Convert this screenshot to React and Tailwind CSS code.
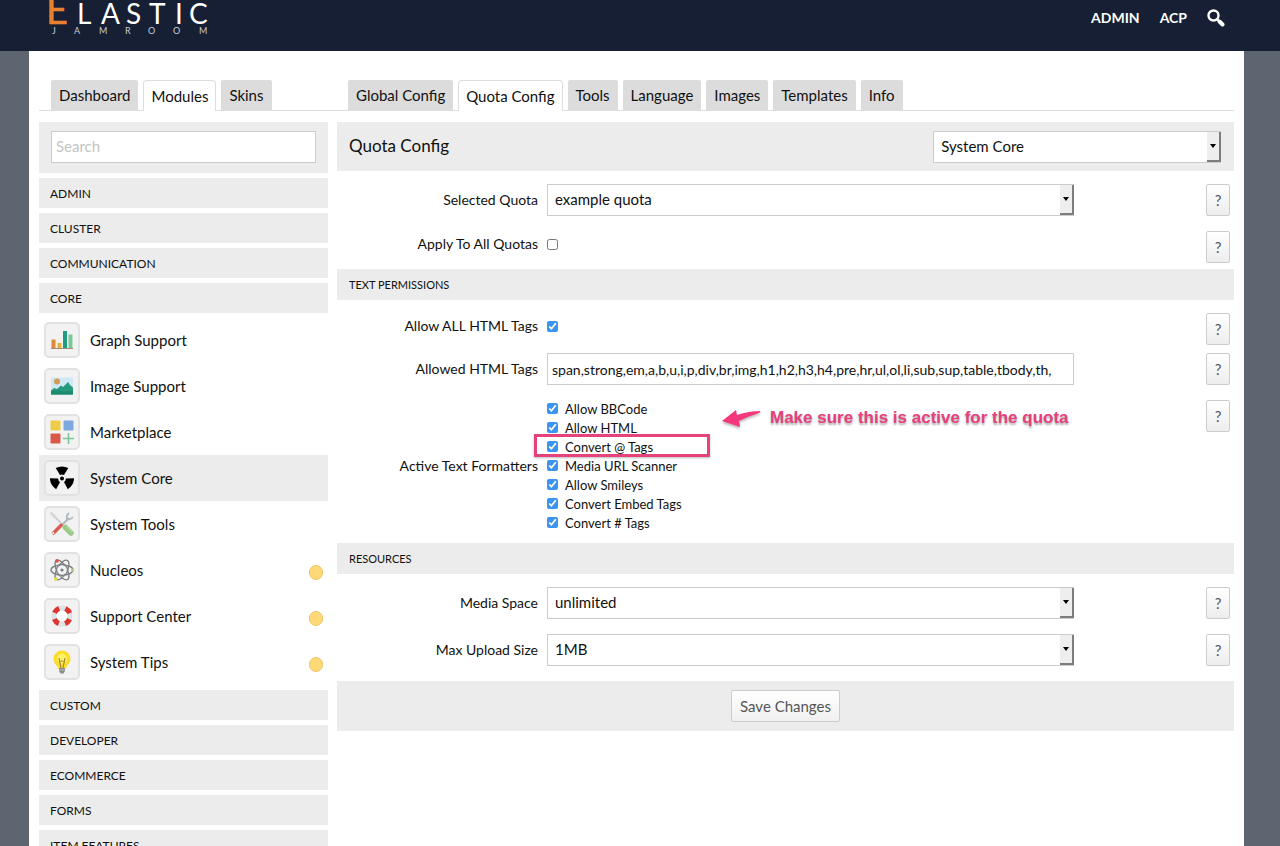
import { useState } from "react";

const moduleTabs = ["Dashboard", "Modules", "Skins"];
const configTabs = ["Global Config", "Quota Config", "Tools", "Language", "Images", "Templates", "Info"];

const topCategories = ["Admin", "Cluster", "Communication", "Core"];
const bottomCategories = ["Custom", "Developer", "Ecommerce", "Forms", "Item Features"];

const formatters = [
    "Allow BBCode",
    "Allow HTML",
    "Convert @ Tags",
    "Media URL Scanner",
    "Allow Smileys",
    "Convert Embed Tags",
    "Convert # Tags",
];

const GraphIcon = () => (
    <svg viewBox="0 0 24 24" className="size-6">
        <rect x="1.5" y="11.5" width="4" height="9" fill="#e0893c" />
        <rect x="7.5" y="15" width="4" height="5.5" fill="#e3b23c" />
        <rect x="13" y="3" width="4" height="17.5" fill="#1f9d80" />
        <rect x="18.5" y="6.500" width="4" height="14" fill="#7cc79a" />
        <path d="M1 20.500h22" stroke="#a58d72" strokeWidth="1" />
    </svg>
);

const ImageIcon = () => (
    <svg viewBox="0 0 24 24" className="size-6">
        <rect x="1" y="3.500" width="22" height="17" fill="#cfe8f5" />
        <circle cx="7" cy="7.500" r="3" fill="#d39a52" />
        <path d="M1 20.500v-4l3-2.500 3 1 4-3.500 2 1.500 5-5 2 3 3 2.500v7z" fill="#279a7c" />
        <path d="M1 20.500v-3l6-1 8 1 8-1v4z" fill="#1e8a6f" />
    </svg>
);

const MarketIcon = () => (
    <svg viewBox="0 0 24 24" className="size-6">
        <rect x="0.500" y="0.500" width="10" height="10" rx="1" fill="#efcb4a" />
        <rect x="13.500" y="0.500" width="10" height="10" rx="1" fill="#7ea9de" />
        <rect x="0.500" y="13.500" width="10" height="10" rx="1" fill="#d95848" />
        <path d="M18.500 13v11M13 18.500h11" stroke="#7cc79a" strokeWidth="1.600" />
    </svg>
);

const CoreIcon = () => (
    <svg viewBox="0 0 24 24" className="size-6">
        <g transform="translate(12 12.500)">
            <circle r="2" fill="#000" />
            <path id="blade" d="M-2 -3.400L-6.300 -10.400Q0 -13.600 6.300 -10.400L2 -3.400Q0 -4.500 -2 -3.400z" fill="#000" />
            <use href="#blade" transform="rotate(120)" />
            <use href="#blade" transform="rotate(240)" />
        </g>
    </svg>
);

const ToolsIcon = () => (
    <svg viewBox="0 0 24 24" className="size-6" fill="none" strokeLinecap="round">
        <path d="M2 2l11 11" stroke="#c4c8cb" strokeWidth="1.600" />
        <path d="M1.500 1.500l4 4" stroke="#d3d6d8" strokeWidth="2.600" />
        <path d="M15.500 15.500l5.500 5.500" stroke="#9cc98b" strokeWidth="5.500" />
        <path d="M17 14.500l5 5" stroke="#b7dba8" strokeWidth="1.200" />
        <path d="M18.500 6.500L11 14" stroke="#b3babf" strokeWidth="2.200" />
        <path d="M18.500 1.500q-2.500 2-1.500 5.500 3.500 1 5.500-1.500" stroke="#b3babf" strokeWidth="1.800" />
        <path d="M11 13.500L3.500 21" stroke="#d6604f" strokeWidth="3.600" />
        <circle cx="3.200" cy="21.200" r="1.100" fill="#f5f5f5" />
    </svg>
);

const NucleosIcon = () => (
    <svg viewBox="0 0 24 24" className="size-6" fill="none" stroke="#7b7e80" strokeWidth="1.300">
        <ellipse cx="12" cy="12" rx="11" ry="5" />
        <ellipse cx="12" cy="12" rx="11" ry="5" transform="rotate(60 12 12)" />
        <ellipse cx="12" cy="12" rx="11" ry="5" transform="rotate(120 12 12)" />
        <circle cx="12" cy="12" r="5.500" fill="#f2f2f2" />
        <circle cx="12" cy="12" r="1.600" fill="#7b7e80" stroke="none" />
        <circle cx="7" cy="2.800" r="1.900" fill="#d9534f" stroke="none" />
        <circle cx="22.500" cy="12" r="1.500" fill="#bcd07a" stroke="none" />
        <circle cx="6" cy="21" r="1.900" fill="#e0d84c" stroke="none" />
    </svg>
);

const SupportIcon = () => (
    <svg viewBox="0 0 24 24" className="size-6" fill="none">
        <circle cx="12" cy="12" r="9.500" stroke="#d3d8dc" strokeWidth="1.500" />
        <circle cx="12" cy="12" r="7.500" stroke="#dde2e5" strokeWidth="5" />
        <circle cx="12" cy="12" r="8" stroke="#e0352f" strokeWidth="5.500" strokeDasharray="6.280 6.280" strokeDashoffset="-3.140" />
        <circle cx="12" cy="12" r="5.500" fill="#fff" />
    </svg>
);

const TipsIcon = () => (
    <svg viewBox="0 0 24 24" className="size-6" fill="none">
        <path d="M12 0.500a8.500 8.500 0 0 0-8.500 8.500c0 3.500 2 5 3.500 7 .8 1.200 1 2.500 1.500 3h7c.500-.5.700-1.800 1.500-3 1.500-2 3.500-3.500 3.500-7A8.500 8.500 0 0 0 12 .5z" fill="#fbdc26" />
        <circle cx="12" cy="8.500" r="5" fill="#fff06c" />
        <path d="M9 8l2 10M15 8l-2 10M10.500 12l1.500-1.500 1.500 1.500" stroke="#8f7a2a" strokeWidth="1" />
        <path d="M9 18h6v3l-1.500 2.500h-3L9 21z" fill="#8b8e91" />
        <path d="M9 20h6" stroke="#c2c5c8" strokeWidth="0.800" />
    </svg>
);

const coreModules = [
    { name: "Graph Support", icon: GraphIcon },
    { name: "Image Support", icon: ImageIcon },
    { name: "Marketplace", icon: MarketIcon },
    { name: "System Core", icon: CoreIcon, active: true },
    { name: "System Tools", icon: ToolsIcon },
    { name: "Nucleos", icon: NucleosIcon, pending: true },
    { name: "Support Center", icon: SupportIcon, pending: true },
    { name: "System Tips", icon: TipsIcon, pending: true },
];

const Logo = () => (
    <svg width="170" height="51" viewBox="0 0 170 51" role="img" aria-label="Elastic Jamroom" className="font-['Lato',sans-serif]">
        <text x="6" y="24" fontSize="38" fill="#e8812f" stroke="#e8812f" strokeWidth="0.500">E</text>
        <text x="37 61 86 109 135 149" y="24" fontSize="28" fill="#fff">LASTIC</text>
        <text x="12 34 59 85 108 133 159" y="34" fontSize="9" fill="#c9ced8">JAMROOM</text>
    </svg>
);

const Header = () => {
    return (
        <header className="h-[51px] bg-[#161f33] flex items-start justify-between pl-10 pr-[55px] text-white">
            <a href="#home"><Logo /></a>
            <nav className="flex items-center gap-5 h-[35px] text-[14px] font-bold">
                <a href="#admin">ADMIN</a>
                <a href="#acp">ACP</a>
                <button type="button" aria-label="Search">
                    <svg width="18" height="18" viewBox="0 0 18 18" fill="none" stroke="#fff" strokeLinecap="round">
                        <circle cx="6.500" cy="6.500" r="5" strokeWidth="2.400" />
                        <path d="M10.500 10.500l1.500 1.500" strokeWidth="2.400" />
                        <path d="M12.500 12.500l3 3" strokeWidth="4" />
                    </svg>
                </button>
            </nav>
        </header>
    );
};

const Tabs = ({ items, active }) => (
    <div className="flex gap-[5px]">
        {items.map((item) => (
            <a
                key={item}
                href="#tab"
                className={
                    item === active
                        ? "h-[31px] -mb-px px-[7px] leading-[30px] rounded-t-sm border border-b-0 border-[#ddd] bg-white"
                        : "h-[30px] px-2 leading-[31px] rounded-t-xs bg-[#dcdcdc]"
                }
            >
                {item}
            </a>
        ))}
    </div>
);

const Category = ({ name }) => (
    <a href="#category" className="block h-[30px] pl-[11px] bg-[#ececec] text-[12px] leading-8 uppercase">
        {name}
    </a>
);

const ModuleRow = ({ name, icon: Icon, active, pending }) => (
    <a href="#module" className={active ? "flex items-center h-[46px] pl-[5px] pr-[5px] bg-[#ececec]" : "flex items-center h-[46px] pl-[5px] pr-[5px]"}>
        <span className="size-9 flex items-center justify-center rounded-[5px] border-2 border-[#e2e2e2] bg-[#f2f2f2]">
            <Icon />
        </span>
        <span className="ml-[10px] grow">{name}</span>
        {pending && <span className="w-[14px] h-[15px] mt-[5px] rounded-full border border-[#ecc766] bg-[#ffd878]" />}
    </a>
);

const Sidebar = () => {
    return (
        <aside className="w-[289px] shrink-0 flex flex-col gap-[5px]">
            <div className="h-[51px] px-3 py-[9px] bg-[#ececec]">
                <input
                    type="text"
                    aria-label="Search"
                    placeholder="Search"
                    className="w-full h-8 px-1 pb-[2px] border border-[#ccc] bg-white placeholder:text-[#c4c4c4]"
                />
            </div>
            {topCategories.map((name) => <Category key={name} name={name} />)}
            <div className="-mt-px">
                {coreModules.map((item) => <ModuleRow key={item.name} {...item} />)}
            </div>
            {bottomCategories.map((name) => <Category key={name} name={name} />)}
        </aside>
    );
};

const Select = ({ id, label, value }) => (
    <div className="relative w-full">
        <select id={id} aria-label={label} className="appearance-none block w-full h-8 pl-[7px] pr-5 pb-[2px] border border-[#ccc] bg-white">
            <option>{value}</option>
        </select>
        <span className="pointer-events-none absolute right-0 top-px bottom-px w-[14px] flex items-center justify-center bg-[#eee] border-r-2 border-b-2 border-[#7d7d7d]">
            <svg width="6" height="4" viewBox="0 0 6 4"><path d="M0 0h6L3 4z" fill="#000" /></svg>
        </span>
    </div>
);

const Checkbox = ({ id, label, checked }) => {
    const [on, setOn] = useState(checked);
    return (
        <input
            id={id}
            type="checkbox"
            aria-label={label}
            checked={on}
            onChange={() => setOn(!on)}
            className="block size-[11px] accent-[#3b94f0]"
        />
    );
};

const HelpButton = () => (
    <button type="button" aria-label="Help" className="w-6 h-8 border border-[#ccc] rounded-xs bg-linear-to-b from-white to-[#ededed] text-[#555]">
        ?
    </button>
);

const row = "grid grid-cols-[201px_23fr_5fr_24px] gap-x-[9px] pr-1";

const SelectRow = ({ id, label, value }) => (
    <div className={row + " py-2 -mb-px"}>
        <label htmlFor={id} className="self-center text-right text-[14px]">{label}</label>
        <Select id={id} value={value} />
        <span />
        <HelpButton />
    </div>
);

const CheckRow = ({ id, label, checked, className }) => (
    <div className={row + " " + className}>
        <label htmlFor={id} className="text-right text-[14px] leading-[26px]">{label}</label>
        <div className="h-[26px] flex items-center"><Checkbox id={id} checked={checked} /></div>
        <span />
        <HelpButton />
    </div>
);

const Section = ({ children }) => (
    <h2 className="h-[31px] pl-3 bg-[#ececec] text-[11px] leading-8 uppercase">{children}</h2>
);

const Callout = () => (
    <div className="absolute left-[175px] top-[9px] flex items-center gap-2 whitespace-nowrap">
        <svg width="40" height="22" viewBox="0 0 40 22" className="drop-shadow-[0_2px_1px_#0004]">
            <path d="M0 14L14 3L15 8Q27 4 38 4Q39 5 37 6Q27 9 17 14L18 20z" fill="#f5387c" />
        </svg>
        <span className="font-['Liberation_Sans',sans-serif] font-bold text-[17px] leading-5 text-[#e8407c] [text-shadow:0_2px_2px_#0005]">
            Make sure this is active for the quota
        </span>
    </div>
);

const FormatterRow = () => (
    <div className={row + " pt-2 pb-[9px]"}>
        <span className="self-center text-right text-[14px]">Active Text Formatters</span>
        <ul className="relative -mt-[2px]">
            {formatters.map((name) => (
                <li key={name} className="relative h-[19px]">
                    <label className="inline-flex items-center gap-[7px] h-[19px] text-[13px]">
                        <Checkbox label={name} checked />
                        {name}
                    </label>
                    {name === "Convert @ Tags" && (
                        <span className="absolute -left-[13px] -top-[2px] w-[176px] h-[23px] border-3 border-[#e6437d] shadow-[0_1px_2px_#0004]" />
                    )}
                </li>
            ))}
            <Callout />
        </ul>
        <span />
        <HelpButton />
    </div>
);

const QuotaForm = () => {
    return (
        <form className="grow min-w-0" onSubmit={(e) => e.preventDefault()}>
            <div className="h-[49px] pl-3 pr-[13px] flex items-center justify-between bg-[#ececec]">
                <h1 className="pb-[2px] text-[17px]">Quota Config</h1>
                <div className="w-[33%]"><Select id="module" label="Module" value="System Core" /></div>
            </div>

            <div className="pt-[5px]">
                <SelectRow id="quota" label="Selected Quota" value="example quota" />
                <CheckRow id="apply-all" label="Apply To All Quotas" checked={false} className="pt-2 pb-[6px]" />
            </div>

            <Section>Text Permissions</Section>
            <div className="pt-[5px] pb-[3px]">
                <CheckRow id="allow-all" label="Allow ALL HTML Tags" checked className="pt-2" />
                <div className={row + " py-2 -mb-px"}>
                    <label htmlFor="tags" className="self-center text-right text-[14px]">Allowed HTML Tags</label>
                    <input
                        id="tags"
                        type="text"
                        defaultValue="span,strong,em,a,b,u,i,p,div,br,img,h1,h2,h3,h4,pre,hr,ul,ol,li,sub,sup,table,tbody,th,"
                        className="w-full h-8 px-1 border border-[#ccc] bg-white text-[14px]"
                    />
                    <span />
                    <HelpButton />
                </div>
                <FormatterRow />
            </div>

            <Section>Resources</Section>
            <div className="pt-[5px] pb-2">
                <SelectRow id="space" label="Media Space" value="unlimited" />
                <SelectRow id="upload" label="Max Upload Size" value="1MB" />
            </div>

            <div className="h-[50px] flex items-center justify-center bg-[#ececec]">
                <button type="submit" className="h-8 px-2 border border-[#ccc] rounded-xs bg-linear-to-b from-white to-[#f0f0f0] text-[#555]">
                    Save Changes
                </button>
            </div>
        </form>
    );
};

export default function App() {
    return (
        <div className="min-h-screen bg-[#5d6670] font-['Lato',sans-serif] text-[15px] leading-5 text-[#111]">
            <Header />
            <main className="ml-[29px] mr-9 px-[10px] pt-[29px] bg-white">
                {/* Tab strip */}
                <div className="flex border-b border-[#ddd] pl-3">
                    <div className="w-[297px] shrink-0"><Tabs items={moduleTabs} active="Modules" /></div>
                    <Tabs items={configTabs} active="Quota Config" />
                </div>

                <div className="flex items-start gap-[9px] pt-[11px]">
                    <Sidebar />
                    <QuotaForm />
                </div>
            </main>
        </div>
    );
}
